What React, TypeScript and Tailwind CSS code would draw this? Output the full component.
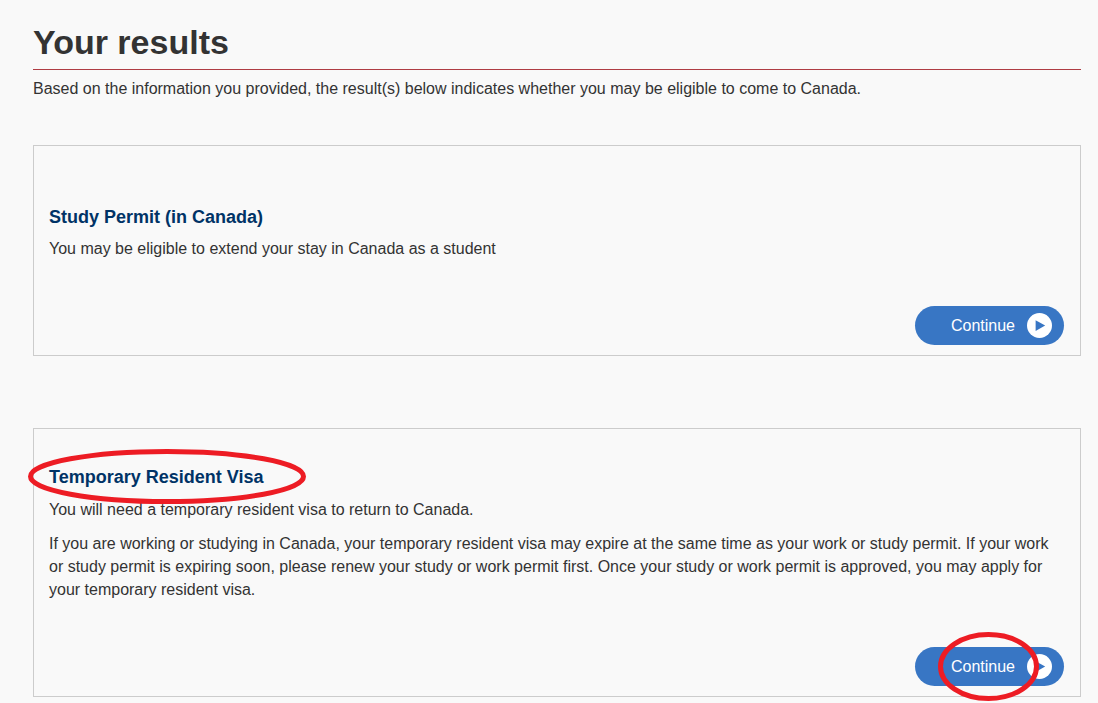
import type { ReactNode } from "react";

function ContinueButton({ children }: { children?: ReactNode }) {
  return (
    <div className="relative">
      <button
        type="button"
        className="flex h-[39px] items-center gap-3 rounded-full bg-[#3876c4] pr-3 pl-9 text-base text-white"
      >
        Continue
        <svg className="size-[25px]" viewBox="0 0 25 25" aria-hidden="true">
          <circle cx="12.5" cy="12.5" r="12.5" fill="#fff" />
          <path d="M8.6 7.2 L18.2 12.6 L8.6 18 Z" fill="#3876c4" />
        </svg>
      </button>
      {children}
    </div>
  );
}

export default function App() {
  return (
    <main className="min-h-screen bg-[#f9f9f9] pt-5 pr-[17px] pb-1.5 pl-[33px] font-['Liberation_Sans',Arial,sans-serif] text-base leading-[23px] text-[#333]">
      <h1 className="border-b border-[#af3c43] pb-1 text-[34px] leading-[45px] font-bold">Your results</h1>
      <p className="mt-[7px]">
        Based on the information you provided, the result(s) below indicates whether you may be eligible to come to Canada.
      </p>

      <section className="mt-[45px] border border-[#ccc] pt-[60px] pr-4 pb-[10px] pl-[15px]">
        <h2 className="text-lg leading-[23px] font-bold text-[#003366]">Study Permit (in Canada)</h2>
        <p className="mt-2">You may be eligible to extend your stay in Canada as a student</p>
        <div className="mt-[46px] flex justify-end">
          <ContinueButton />
        </div>
      </section>

      <section className="mt-[72px] border border-[#ccc] pt-[37px] pr-4 pb-[10px] pl-[15px]">
        <div className="relative">
          <h2 className="text-lg leading-[23px] font-bold text-[#003366]">Temporary Resident Visa</h2>
          <svg className="pointer-events-none absolute -top-[17px] -left-[21px] h-[55px] w-[278px]" viewBox="0 0 278 55" aria-hidden="true">
            <ellipse cx="139" cy="27.5" rx="136.5" ry="25" fill="none" stroke="#ed1c24" strokeWidth="5" />
          </svg>
        </div>
        <p className="mt-[9px]">You will need a temporary resident visa to return to Canada.</p>
        <p className="mt-[11px]">
          If you are working or studying in Canada, your temporary resident visa may expire at the same time as your work or study permit. If your work or study permit is expiring soon, please renew your study or work permit first. Once your study or work permit is approved, you may apply for your temporary resident visa.
        </p>
        <div className="mt-[46px] flex justify-end">
          <ContinueButton>
            <svg className="pointer-events-none absolute -top-[15px] left-[23px] h-[69px] w-[101px]" viewBox="0 0 101 69" aria-hidden="true">
              <ellipse cx="50.5" cy="34.5" rx="48" ry="32" fill="none" stroke="#ed1c24" strokeWidth="5" />
            </svg>
          </ContinueButton>
        </div>
      </section>
    </main>
  );
}
